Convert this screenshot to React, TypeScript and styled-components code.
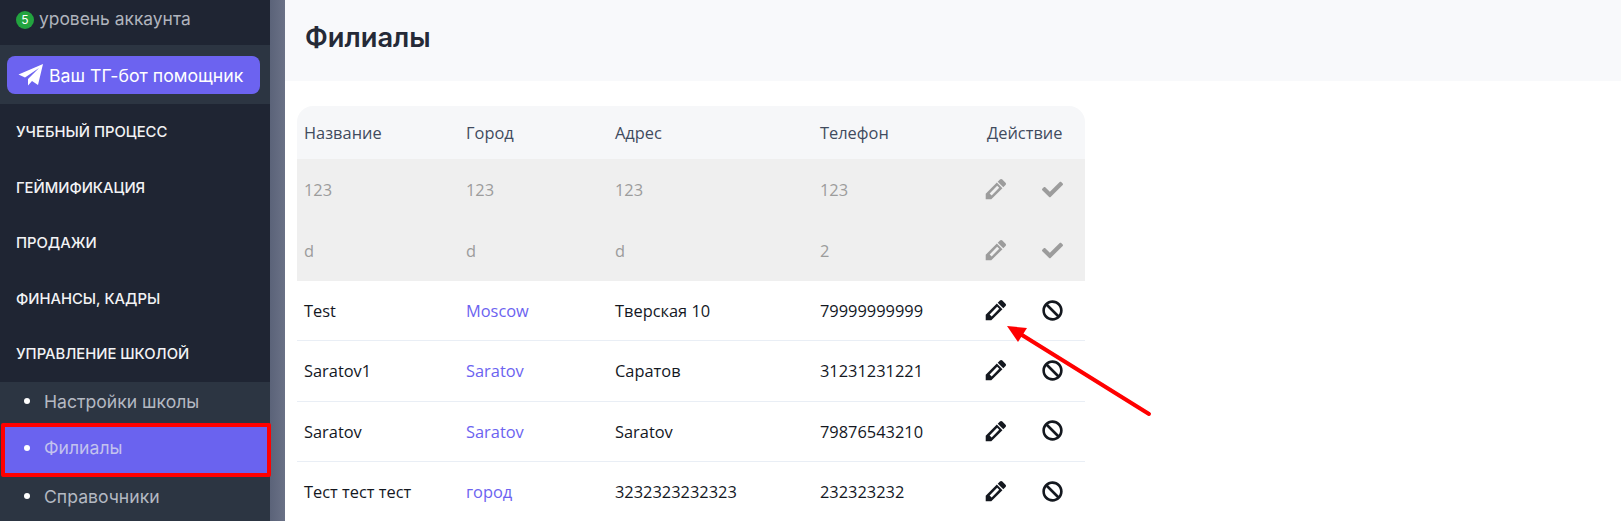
import * as React from 'react';
import styled, { createGlobalStyle } from 'styled-components';
import { FaBan, FaCheck } from 'react-icons/fa';

const GlobalStyle = createGlobalStyle`
  html, body {
    margin: 0;
    padding: 0;
    height: 521px;
    overflow: hidden;
    background: #fff;
    font-family: Inter, sans-serif;
  }
`;

const PencilIcon = () => (
  <svg width="24" height="24" viewBox="0 0 1792 1792" fill="currentColor" fillRule="evenodd">
    <path d="M960 416l416 416-832 832h-416v-416z M985 660L1135 810L570 1375L420 1225Z" />
    <path d="M1643 512q0 53-37 90l-166 166-416-416 166-165q36-38 90-38 53 0 91 38l235 234q37 39 37 91z" />
  </svg>
);

const menu = ['УЧЕБНЫЙ ПРОЦЕСС', 'ГЕЙМИФИКАЦИЯ', 'ПРОДАЖИ', 'ФИНАНСЫ, КАДРЫ', 'УПРАВЛЕНИЕ ШКОЛОЙ'];
const subMenu = ['Настройки школы', 'Филиалы', 'Справочники'];

const disabledRows = [
  ['123', '123', '123', '123'],
  ['d', 'd', 'd', '2'],
];
const rows = [
  ['Test', 'Moscow', 'Тверская 10', '79999999999'],
  ['Saratov1', 'Saratov', 'Саратов', '31231231221'],
  ['Saratov', 'Saratov', 'Saratov', '79876543210'],
  ['Тест тест тест', 'город', '3232323232323', '232323232'],
];

export default function App() {
  return (
    <Page>
      <GlobalStyle />
      <Sidebar>
        <Level>
          <LevelBadge>5</LevelBadge>
          уровень аккаунта
        </Level>
        <BotStrip>
          <BotButton>
            <svg width="26" height="22" viewBox="0 0 26 22" fill="#fff">
              <path d="M25 0 L0.5 10.5 L7 13.5 L21 4 L10 15 L10 21.5 L14 17 L20 21 Z" />
            </svg>
            Ваш ТГ-бот помощник
          </BotButton>
        </BotStrip>
        <Menu>
          {menu.map((item) => (
            <MenuItem key={item}>{item}</MenuItem>
          ))}
        </Menu>
        <SubMenu>
          {subMenu.map((item) => (
            <SubItem key={item} $active={item === 'Филиалы'}>
              <Dot />
              {item}
            </SubItem>
          ))}
        </SubMenu>
      </Sidebar>
      <Gutter />
      <Main>
        <Header>
          <Title>Филиалы</Title>
        </Header>
        <Content>
          <Table>
            <HeadRow>
              <Cell>Название</Cell>
              <Cell>Город</Cell>
              <Cell>Адрес</Cell>
              <Cell>Телефон</Cell>
              <Cell>Действие</Cell>
            </HeadRow>
            {disabledRows.map((row, i) => (
              <MutedRow key={i}>
                {row.map((value, j) => (
                  <Cell key={j}>{value}</Cell>
                ))}
                <Actions>
                  <PencilIcon />
                  <FaCheck size={21} />
                </Actions>
              </MutedRow>
            ))}
            {rows.map((row) => (
              <BodyRow key={row[0]}>
                <Cell>{row[0]}</Cell>
                <CityCell>{row[1]}</CityCell>
                <Cell>{row[2]}</Cell>
                <Cell>{row[3]}</Cell>
                <Actions>
                  <PencilIcon />
                  <FaBan size={21} />
                </Actions>
              </BodyRow>
            ))}
          </Table>
        </Content>
      </Main>
      <Arrow viewBox="0 0 160 110" width="160" height="110">
        <line x1="149" y1="92" x2="22" y2="13" stroke="#ff0000" strokeWidth="4" strokeLinecap="round" />
        <polygon points="7,4 27,6 18,20" fill="#ff0000" />
      </Arrow>
    </Page>
  );
}

const Page = styled.div`
  position: relative;
  display: flex;
  width: 1621px;
  height: 521px;
  overflow: hidden;
`;

const Sidebar = styled.aside`
  width: 270px;
  flex-shrink: 0;
  display: flex;
  flex-direction: column;
  background: #1f2533;
`;

const Level = styled.div`
  height: 45px;
  box-sizing: border-box;
  padding: 2px 0 0 16px;
  display: flex;
  align-items: flex-start;
  gap: 5px;
  font-size: 17.4px;
  line-height: 34px;
  color: #b0b4bd;
`;

const LevelBadge = styled.span`
  width: 18px;
  height: 18px;
  margin-top: 9px;
  border-radius: 50%;
  background: #22a33f;
  color: #fff;
  font-size: 12px;
  line-height: 18px;
  text-align: center;
`;

const BotStrip = styled.div`
  height: 59px;
  box-sizing: border-box;
  padding: 11px 10px 0 7px;
  background: #2c3542;
`;

const BotButton = styled.div`
  height: 38px;
  display: flex;
  align-items: center;
  gap: 5px;
  padding-left: 11px;
  border-radius: 8px;
  background: #6c63f0;
  color: #fff;
  font-size: 17.7px;
`;

const Menu = styled.nav`
  display: flex;
  flex-direction: column;
`;

const MenuItem = styled.div`
  height: 55.5px;
  box-sizing: border-box;
  padding: 19px 0 0 16px;
  font-size: 14.8px;
  line-height: 18px;
  font-weight: 500;
  color: #f2f3f5;
`;

const SubMenu = styled.div`
  flex: 1;
  display: flex;
  flex-direction: column;
  background: #2c3542;
`;

const SubItem = styled.div<{ $active?: boolean }>`
  height: ${(p) => (p.$active ? '54px' : '41px')};
  box-sizing: border-box;
  display: flex;
  align-items: center;
  padding-left: ${(p) => (p.$active ? '19px' : '24px')};
  padding-bottom: ${(p) => (p.$active ? '4px' : '2px')};
  margin: ${(p) => (p.$active ? '0 -1px 0 1px' : '0')};
  font-size: 17.6px;
  color: ${(p) => (p.$active ? '#c3c2ee' : '#b4b9c2')};
  background: ${(p) => (p.$active ? '#6a63ef' : 'transparent')};
  border: ${(p) => (p.$active ? '4px solid #ff0000' : 'none')};
  border-radius: ${(p) => (p.$active ? '2px' : '0')};
  position: ${(p) => (p.$active ? 'relative' : 'static')};
  z-index: 1;
`;

const Dot = styled.span`
  width: 6px;
  height: 6px;
  margin-right: 14px;
  border-radius: 50%;
  background: #fff;
`;

const Gutter = styled.div`
  width: 15px;
  flex-shrink: 0;
  background: linear-gradient(90deg, #5b6379, #6a7186);
`;

const Main = styled.main`
  flex: 1;
  min-width: 0;
`;

const Header = styled.header`
  height: 81px;
  box-sizing: border-box;
  padding: 21px 20px 0;
  background: #f8f9fb;
`;

const Title = styled.h1`
  margin: 0;
  font-size: 27.3px;
  line-height: 34px;
  font-weight: 600;
  color: #252a37;
`;

const Content = styled.div`
  padding: 25px 0 0 12px;
`;

const Table = styled.div`
  width: 788px;
  font-family: 'Open Sans', sans-serif;
  font-size: 16.4px;
`;

const Row = styled.div`
  display: grid;
  grid-template-columns: 162px 149px 205px 167px 105px;
  align-items: center;
  padding-left: 7px;
  box-sizing: border-box;
`;

const HeadRow = styled(Row)`
  height: 53px;
  background: #f6f7f9;
  border-radius: 16px 16px 0 0;
  color: #414b5e;
`;

const MutedRow = styled(Row)`
  height: 61px;
  background: #efefef;
  color: #9c9c9c;
`;

const BodyRow = styled(Row)`
  height: 60.3px;
  background: #fff;
  color: #14181f;
  border-bottom: 1px solid #e9eef5;
`;

const Cell = styled.div`
  white-space: nowrap;
`;

const CityCell = styled(Cell)`
  color: #6c63f0;
`;

const Actions = styled.div`
  display: flex;
  align-items: center;
  gap: 34px;
  margin: -1px 0 0 -3px;
`;

const Arrow = styled.svg`
  position: absolute;
  left: 1000px;
  top: 322px;
`;
